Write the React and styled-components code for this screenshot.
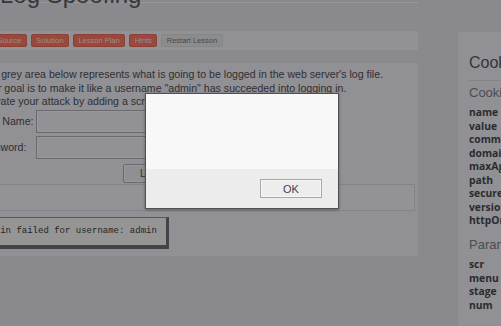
import React from "react";
import styled, { createGlobalStyle } from "styled-components";

const GlobalStyle = createGlobalStyle`
  html, body {
    margin: 0;
    padding: 0;
    background: #d8d7df;
    overflow: hidden;
    width: 501px;
    height: 326px;
  }
  #root { width: 501px; height: 326px; overflow: hidden; position: relative; }
`;

const Page = styled.div`
  display: grid;
  grid-template-columns: 448px 200px;
  column-gap: 40px;
  margin-left: -30px;
  margin-top: -18px;
  font-family: "Liberation Sans", Arial, sans-serif;
  color: #4a4a4e;
`;

const Main = styled.div`
  display: flex;
  flex-direction: column;
`;

const TitleBar = styled.div`
  height: 20px;
  border-bottom: 1px solid #ecebf1;
  margin-bottom: 28px;
`;

const Title = styled.h1`
  margin: 0;
  font-size: 24px;
  font-weight: 400;
  line-height: 26px;
  color: #56565a;
  padding-left: 30px;
  white-space: nowrap;
`;

const ButtonBar = styled.div`
  display: flex;
  gap: 4px;
  align-items: center;
  height: 19px;
  padding-left: 22px;
  background: #e4e3eb;
  margin-bottom: 13px;
`;

const LessonButton = styled.span`
  display: inline-flex;
  align-items: center;
  height: 11px;
  padding: 0 4.5px;
  border-radius: 2px;
  font-size: 7.5px;
  color: ${(p) => (p.$muted ? "#727274" : "#ffd6ce")};
  background: ${(p) => (p.$muted ? "#dcdcde" : "#ec7262")};
  border: 1px solid ${(p) => (p.$muted ? "#d2d2d4" : "#de6355")};
  white-space: nowrap;
`;

const LessonPanel = styled.div`
  background: #e2e1e9;
  height: 193px;
  padding: 5px 0 0 10px;
  box-sizing: border-box;
  display: flex;
  flex-direction: column;
`;

const Para = styled.p`
  margin: 0;
  font-size: 10.6px;
  line-height: 13.5px;
  color: #4c4c50;
  white-space: nowrap;
`;

const FormGrid = styled.div`
  display: grid;
  grid-template-columns: 59px 200px;
  row-gap: 3px;
  align-items: center;
  margin: 1px 0 0 -3px;
`;

const Label = styled.label`
  font-size: 10.6px;
  color: #4c4c50;
  white-space: nowrap;
`;

const Input = styled.div`
  height: 21px;
  border: 1px solid #a6a5ab;
  box-shadow: inset 0 0 0 1px #eeedf3;
  background: #e5e4eb;
`;

const LoginRow = styled.div`
  grid-column: 2;
  padding-left: 87px;
  margin-top: 2px;
`;

const LoginButton = styled.div`
  width: 60px;
  height: 17px;
  border: 1px solid #a6a5ab;
  box-shadow: inset 0 0 0 1px #eeedf3;
  background: #e1e0e6;
  border-radius: 2px;
  font-size: 10px;
  line-height: 17px;
  padding-left: 16px;
  box-sizing: content-box;
  color: #4c4c50;
`;

const RowBox = styled.div`
  margin-top: 1px;
  margin-left: -10px;
  width: 443px;
  height: 25px;
  border: 1px solid #cecdd5;
  background: #e5e4ec;
`;

const LogBox = styled.div`
  margin-top: 6px;
  margin-left: 0;
  width: 182px;
  height: 27px;
  background: #eaeaea;
  border-style: solid;
  border-color: #8a8a8a #6a6a6a #6a6a6a #8a8a8a;
  border-width: 1px 3px 4px 1px;
  display: flex;
  align-items: center;
  padding-left: 3px;
  box-sizing: content-box;
`;

const LogText = styled.span`
  font-family: "Liberation Mono", "Courier New", monospace;
  font-size: 9px;
  color: #383838;
  white-space: nowrap;
`;

const Sidebar = styled.aside`
  margin-top: 50px;
  background: #e3e2ea;
  padding: 20px 0 0 11px;
  height: 320px;
  box-sizing: border-box;
  white-space: nowrap;
  overflow: hidden;
`;

const SideTitle = styled.h2`
  margin: 0;
  font-size: 16px;
  font-weight: 400;
  line-height: 22px;
  color: #535358;
  padding-bottom: 6px;
  border-bottom: 1px solid #d0cfd6;
`;

const SideHeading = styled.h3`
  margin: ${(p) => p.$top}px 0 ${(p) => p.$bottom}px;
  font-size: 13px;
  font-weight: 400;
  line-height: 16px;
  color: #78787e;
`;

const KeyList = styled.ul`
  list-style: none;
  margin: 0;
  padding: 0;
`;

const Key = styled.li`
  font-family: "Open Sans", sans-serif;
  font-weight: 700;
  font-size: 10.3px;
  line-height: 13.5px;
  color: #444448;
`;

const Overlay = styled.div`
  position: fixed;
  inset: 0;
  background: rgba(0, 0, 0, 0.36);
`;

const Dialog = styled.div`
  position: absolute;
  left: 145px;
  top: 93px;
  width: 192px;
  border: 1px solid #505050;
  box-shadow: 0 1px 3px rgba(0, 0, 0, 0.35);
  background: #f8f8f8;
  display: flex;
  flex-direction: column;
  font-family: "Liberation Sans", Arial, sans-serif;
`;

const DialogBody = styled.div`
  height: 75px;
  background: #f8f8f8;
`;

const DialogFooter = styled.div`
  height: 39px;
  background: #ececec;
  display: flex;
  justify-content: flex-end;
  align-items: flex-start;
  padding: 10px 16px 0 0;
  box-sizing: border-box;
`;

const OkButton = styled.button`
  width: 62px;
  height: 19px;
  border: 1px solid #a8a8a8;
  background: #ededed;
  border-radius: 0;
  font-family: "Liberation Sans", Arial, sans-serif;
  font-size: 11px;
  color: #444;
  padding: 0;
  box-shadow: inset 0 0 0 1px #f6f6f6;
`;

const cookies = ["name", "value", "comment", "domain", "maxAge", "path", "secure", "version", "httpOnly"];
const params = ["scr", "menu", "stage", "num"];

export default function App() {
  return (
    <>
      <GlobalStyle />
      <Page>
        <Main>
          <TitleBar>
            <Title>Log Spoofing</Title>
          </TitleBar>
          <ButtonBar>
            <LessonButton>Source</LessonButton>
            <LessonButton>Solution</LessonButton>
            <LessonButton>Lesson Plan</LessonButton>
            <LessonButton>Hints</LessonButton>
            <LessonButton $muted>Restart Lesson</LessonButton>
          </ButtonBar>
          <LessonPanel>
            <Para>The grey area below represents what is going to be logged in the web server's log file.</Para>
            <Para>Your goal is to make it like a username "admin" has succeeded into logging in.</Para>
            <Para>Elevate your attack by adding a script to the log file.</Para>
            <FormGrid>
              <Label>User Name:</Label>
              <Input />
              <Label>Password:</Label>
              <Input />
              <LoginRow>
                <LoginButton>Login</LoginButton>
              </LoginRow>
            </FormGrid>
            <RowBox />
            <LogBox>
              <LogText>Login failed for username: admin</LogText>
            </LogBox>
          </LessonPanel>
        </Main>
        <Sidebar>
          <SideTitle>Cookies / Parameters</SideTitle>
          <SideHeading $top={4} $bottom={5}>Cookies</SideHeading>
          <KeyList>
            {cookies.map((c) => (
              <Key key={c}>{c}</Key>
            ))}
          </KeyList>
          <SideHeading $top={9.5} $bottom={5}>Parameters</SideHeading>
          <KeyList>
            {params.map((c) => (
              <Key key={c}>{c}</Key>
            ))}
          </KeyList>
        </Sidebar>
      </Page>
      <Overlay>
        <Dialog role="dialog">
          <DialogBody />
          <DialogFooter>
            <OkButton>OK</OkButton>
          </DialogFooter>
        </Dialog>
      </Overlay>
    </>
  );
}
